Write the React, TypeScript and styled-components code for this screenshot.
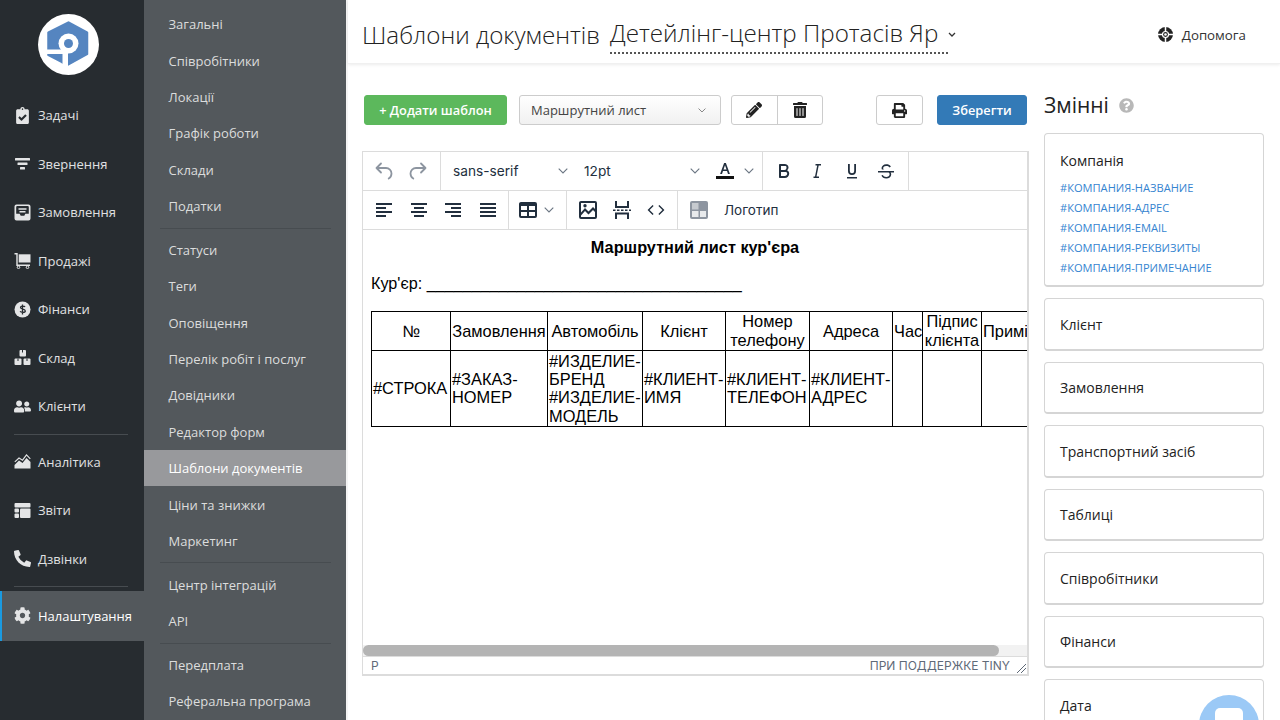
import React from "react";
import styled, { createGlobalStyle } from "styled-components";
import {
  FaClipboardCheck,
  FaUserFriends,
  FaPhoneAlt,
  FaCog,
  FaPencilAlt,
  FaTrashAlt,
  FaPrint,
  FaQuestionCircle,
} from "react-icons/fa";

const GlobalStyle = createGlobalStyle`
  html, body { margin: 0; padding: 0; height: 720px; overflow: hidden; background: #fff; }
  * { box-sizing: border-box; }
  body { font-family: "Open Sans", "Liberation Sans", sans-serif; color: #222; }
`;

const Page = styled.div`
  display: flex;
  width: 1280px;
  height: 720px;
  overflow: hidden;
  position: relative;
`;

const MainNav = styled.nav`
  width: 144px;
  flex: none;
  background: #272c30;
  display: flex;
  flex-direction: column;
`;

const LogoWrap = styled.div`
  height: 91px;
  flex: none;
  display: flex;
  justify-content: center;
  padding-top: 13.5px;
  padding-right: 7px;
`;

const NavItem = styled.a<{ $active?: boolean }>`
  height: ${(p) => (p.$active ? "49.5px" : "48.5px")};
  flex: none;
  display: flex;
  align-items: center;
  gap: 7px;
  padding-left: ${(p) => (p.$active ? "12px" : "14px")};
  margin-top: ${(p) => (p.$active ? "1px" : "0")};
  font-size: 13px;
  color: ${(p) => (p.$active ? "#fff" : "#e0e1e2")};
  font-weight: ${(p) => (p.$active ? 500 : 400)};
  background: ${(p) => (p.$active ? "#53585c" : "transparent")};
  border-left: ${(p) => (p.$active ? "2px solid #1a9ae0" : "0")};
`;

const NavIcon = styled.span`
  width: 17px;
  height: 17px;
  display: flex;
  align-items: center;
  justify-content: center;
  color: #e4e5e6;
  font-size: 17px;
  flex: none;
`;

const NavRule = styled.hr`
  margin: 3px 20px 3px 14px;
  border: 0;
  border-top: 1px solid #474c50;
  height: 1px;
  flex: none;
  width: 114px;
`;

const SubNav = styled.nav`
  width: 202px;
  flex: none;
  background: #53585c;
  padding-top: 6px;
  display: flex;
  flex-direction: column;
`;

const SubItem = styled.a<{ $active?: boolean }>`
  height: 36.4px;
  flex: none;
  display: flex;
  align-items: center;
  padding-left: 24.5px;
  font-size: 13px;
  color: ${(p) => (p.$active ? "#fff" : "#dcdddd")};
  font-weight: ${(p) => (p.$active ? 500 : 400)};
  background: ${(p) => (p.$active ? "#98999c" : "transparent")};
`;

const SubRule = styled.hr`
  margin: 3.2px 15px 3.2px 16px;
  border: 0;
  border-top: 1px solid #474c50;
  height: 1px;
  flex: none;
`;

const Main = styled.main`
  flex: 1;
  min-width: 0;
  display: flex;
  flex-direction: column;
  border-left: 2px solid #f4f4f4;
`;

const Header = styled.header`
  height: 64px;
  flex: none;
  display: flex;
  align-items: center;
  padding: 6px 34px 0 14px;
  border-bottom: 1px solid #f0f0f0;
  box-shadow: 0 1px 3px rgba(0, 0, 0, 0.08);
`;

const Title = styled.h1`
  margin: 0;
  font-size: 24.2px;
  line-height: 32px;
  font-weight: 300;
  color: #222;
`;

const Company = styled.div`
  margin-left: 10px;
  font-size: 24.2px;
  line-height: 32px;
  font-weight: 300;
  color: #222;
  border-bottom: 2px dotted #555;
  height: 37px;
  flex: none;
  width: 338px;
  margin-top: 1px;
  white-space: nowrap;
`;

const Caret = styled.svg`
  width: 8px;
  height: 5px;
  flex: none;
`;

const Help = styled.a`
  margin-left: auto;
  display: flex;
  align-items: center;
  gap: 9px;
  font-size: 13.3px;
  color: #333;
`;

const Body = styled.div`
  flex: 1;
  min-height: 0;
  display: flex;
`;

const Work = styled.section`
  width: 681px;
  flex: none;
  padding: 31px 0 0 14px;
`;

const Actions = styled.div`
  display: flex;
  align-items: center;
  height: 30px;
  margin-left: 2px;
`;

const Btn = styled.button<{ $w: number; $bg?: string; $ml?: number }>`
  width: ${(p) => p.$w}px;
  height: 30px;
  margin-left: ${(p) => p.$ml ?? 0}px;
  padding: 0;
  border-radius: 3px;
  border: 1px solid ${(p) => p.$bg ?? "#ccc"};
  background: ${(p) => p.$bg ?? "#fff"};
  color: ${(p) => (p.$bg ? "#fff" : "#222")};
  font: 600 12.8px "Open Sans", sans-serif;
  display: flex;
  align-items: center;
  justify-content: center;
  svg { font-size: 15px; }
`;

const SelectBox = styled.div`
  width: 202px;
  height: 30px;
  margin-left: 12px;
  border: 1px solid #ccc;
  border-radius: 3px;
  background: linear-gradient(#fff, #f1f1f1);
  display: flex;
  align-items: center;
  justify-content: space-between;
  padding: 0 14px 0 11px;
  font-size: 13px;
  color: #444;
`;

const BtnGroup = styled.div`
  display: flex;
  margin-left: 10px;
  border: 1px solid #ccc;
  border-radius: 3px;
  height: 30px;
  width: 92px;
`;

const GroupCell = styled.div`
  flex: 1;
  display: flex;
  align-items: center;
  justify-content: center;
  color: #222;
  font-size: 16px;
  & + & { border-left: 1px solid #ccc; }
`;

const Editor = styled.div`
  margin-top: 26px;
  width: 667px;
  height: 525px;
  border-style: solid;
  border-width: 1px 2px 2px 1px;
  border-color: #dcdcdc;
  display: flex;
  flex-direction: column;
  overflow: hidden;
`;

const ToolRow = styled.div`
  height: 39px;
  flex: none;
  display: flex;
  border-bottom: 1px solid #dcdcdc;
  color: #222f3e;
`;

const ToolGroup = styled.div<{ $w: number }>`
  width: ${(p) => p.$w}px;
  flex: none;
  display: flex;
  align-items: center;
  border-right: 1px solid #dcdcdc;
  padding: 0 4px;
  &:last-child { border-right: 0; }
`;

const ToolBtn = styled.span<{ $w?: number; $muted?: boolean }>`
  width: ${(p) => p.$w ?? 34}px;
  height: 24px;
  flex: none;
  display: flex;
  align-items: center;
  justify-content: center;
  color: ${(p) => (p.$muted ? "#8d95a0" : "#222f3e")};
`;

const ToolSelect = styled.span<{ $w: number; $pr: number }>`
  width: ${(p) => p.$w}px;
  flex: none;
  font: 13.7px Inter, "Open Sans", sans-serif;
  color: #222f3e;
  display: flex;
  align-items: center;
  justify-content: space-between;
  padding: 0 ${(p) => p.$pr}px 0 8px;
`;

const ToolLabel = styled.span`
  font: 13.5px Inter, "Open Sans", sans-serif;
  color: #222f3e;
  margin-left: 8px;
`;

const Doc = styled.div`
  flex: 1;
  min-height: 0;
  overflow: hidden;
  padding: 0 0 0 8px;
  font: 16.4px/18.4px "Liberation Sans", Arial, sans-serif;
  color: #000;
`;

const DocTitle = styled.p`
  margin: 7.5px 8px 0 0;
  text-align: center;
  font-weight: 700;
  font-size: 16.3px;
`;

const DocLine = styled.p`
  margin: 18px 0 0 0;
  white-space: nowrap;
  font-size: 16.2px;
`;

const DocTable = styled.table`
  margin-top: 18.5px;
  border-collapse: collapse;
  table-layout: fixed;
  width: 678px;
  & td {
    border: 1px solid #000;
    padding: 0 1px;
    line-height: 18.4px;
    vertical-align: middle;
  }
`;

const HeadCell = styled.td`
  text-align: center;
  height: 39px;
  white-space: normal;
`;

const Cell = styled.td`
  height: 76px;
`;

const HScroll = styled.div`
  height: 11px;
  flex: none;
  background: #f2f2f2;
`;

const HThumb = styled.div`
  width: 636px;
  height: 100%;
  background: #b4b4b4;
  border-radius: 6px;
`;

const StatusBar = styled.div`
  height: 18px;
  flex: none;
  border-top: 1px solid #dcdcdc;
  display: flex;
  align-items: center;
  justify-content: space-between;
  padding: 0 1px 0 8px;
  font: 12px Inter, "Open Sans", sans-serif;
  color: #5f6a78;
`;

const Resize = styled.svg`
  width: 9px;
  height: 9px;
  margin-left: 7px;
  margin-top: 6px;
`;

const Brand = styled.span`
  display: flex;
  align-items: center;
`;

const Side = styled.aside`
  width: 220px;
  flex: none;
  margin-left: 15px;
  padding-top: 26px;
  display: flex;
  flex-direction: column;
`;

const SideTitle = styled.h2`
  margin: 0 0 13px;
  height: 30px;
  font-size: 21px;
  line-height: 30px;
  font-weight: 400;
  color: #222;
  display: flex;
  align-items: center;
  svg { font-size: 15px; color: #b8b8b8; margin-left: 10px; }
`;

const Card = styled.div`
  width: 220px;
  height: 52.5px;
  flex: none;
  margin-bottom: 11px;
  border: 1px solid #d5d5d5;
  border-bottom-width: 2px;
  border-radius: 4px;
  padding: 1px 15px 0;
  font-size: 14px;
  color: #222;
  display: flex;
  align-items: center;
`;

const OpenCard = styled(Card)`
  height: 154px;
  display: block;
  padding-top: 16.5px;
`;

const VarLink = styled.a`
  display: block;
  font-size: 11.1px;
  line-height: 20.2px;
  color: #3584d0;
  white-space: nowrap;
`;

const CardName = styled.div`
  line-height: 20px;
  margin-bottom: 7px;
`;

const Chat = styled.div`
  position: absolute;
  left: 1199px;
  top: 695px;
  width: 60px;
  height: 60px;
  border-radius: 50%;
  background: #9bc9f6;
  display: flex;
  justify-content: center;
  padding-top: 13px;
`;

const ChatGlyph = styled.div`
  width: 28px;
  height: 22px;
  border-radius: 5px;
  background: #fff;
`;

const Ico = ({ children, w = 24 }: { children: React.ReactNode; w?: number }) => (
  <svg width={w} height={w} viewBox="0 0 24 24" fill="currentColor" stroke="none">
    {children}
  </svg>
);

const Chevron = ({ color = "#6b7683", w = 10 }: { color?: string; w?: number }) => (
  <svg width={w} height={w * 0.6} viewBox="0 0 10 6" fill="none" stroke={color} strokeWidth="1.1">
    <path d="M.7.7L5 5 9.300.7" />
  </svg>
);

const Logo = () => (
  <svg width="61" height="61" viewBox="0 0 61 61">
    <circle cx="30.5" cy="30.5" r="30.5" fill="#fff" />
    <path
      d="M30.500 8.500L49 18.500V40L30 50.500 24 48 10.500 41V18.500Z"
      fill="#5585c0"
      stroke="#5585c0"
      strokeWidth="2.500"
      strokeLinejoin="round"
    />
    <rect x="24.500" y="29" width="5.500" height="24" fill="#fff" />
    <rect x="8" y="35.500" width="20" height="4.500" fill="#fff" />
    <circle cx="30.500" cy="29.500" r="10" fill="#fff" />
    <circle cx="30.500" cy="29.500" r="4.500" fill="#5585c0" />
  </svg>
);

const LifeRing = () => (
  <svg width="15" height="15" viewBox="0 0 15 15">
    <circle cx="7.500" cy="7.500" r="7.500" fill="#222" />
    <path d="M7.500 0v15M0 7.500h15" stroke="#fff" strokeWidth="1.500" />
    <circle cx="7.500" cy="7.500" r="3.600" fill="#fff" />
    <circle cx="7.500" cy="7.500" r="2.400" fill="#222" />
    <circle cx="7.500" cy="7.500" r="1.300" fill="#fff" />
  </svg>
);

const glyph = { width: 17, height: 17, viewBox: "0 0 17 17", fill: "#e4e5e6" };

const mainNav = [
  ["Задачі", <FaClipboardCheck key="a" />],
  [
    "Звернення",
    <svg key="b" {...glyph}>
      <rect x="1" y="3" width="15" height="2.400" rx=".5" />
      <rect x="3.500" y="7.500" width="10" height="2.400" rx=".5" />
      <rect x="6" y="12" width="5" height="2.400" rx=".5" />
    </svg>,
  ],
  [
    "Замовлення",
    <svg key="c" {...glyph}>
      <path d="M2.500.5h12a2 2 0 0 1 2 2v12a2 2 0 0 1-2 2h-12a2 2 0 0 1-2-2v-12a2 2 0 0 1 2-2z" />
      <path d="M2.200 9.800V3a1 1 0 0 1 1-1h10.600a1 1 0 0 1 1 1v6.800h-3.500l-1 2H6.700l-1-2z" fill="#272c30" />
      <path d="M4.500 4.300h8v1.400h-8zM5.500 7h6v1.400h-6z" />
    </svg>,
  ],
  [
    "Продажі",
    <svg key="d" {...glyph}>
      <path d="M.5 1h3.200v11.500H16V14H2.300V2.400H.5z" />
      <path d="M4.700 2.300H16.500V10.500H4.700z" />
      <circle cx="4.500" cy="15.300" r="1.300" fill="none" stroke="#e4e5e6" />
      <circle cx="13.500" cy="15.300" r="1.300" fill="none" stroke="#e4e5e6" />
    </svg>,
  ],
  [
    "Фінанси",
    <svg key="e" {...glyph}>
      <circle cx="8.500" cy="8.500" r="8" />
      <path
        d="M11 6c-.5-1-4.500-1.400-4.500.6 0 2 4.800 1.200 4.800 3.300 0 2-4.500 1.700-5.200.4M8.500 3.500v10"
        stroke="#272c30"
        strokeWidth="1.300"
        fill="none"
      />
    </svg>,
  ],
  [
    "Склад",
    <svg key="f" {...glyph}>
      <rect x="5.500" y="1" width="6.500" height="6.500" rx="1" />
      <rect x=".5" y="9.500" width="7" height="6.500" rx="1" />
      <rect x="9.500" y="9.500" width="7" height="6.500" rx="1" />
      <path d="M8 1v2.500h1V1zM3.500 9.500V12h1V9.500zM12.500 9.500V12h1V9.500z" fill="#272c30" />
    </svg>,
  ],
  ["Клієнти", <FaUserFriends key="g" />],
] as const;

const mainNav2 = [
  [
    "Аналітика",
    <svg key="h" {...glyph}>
      <path d="M.8 8.800L5 5l3.500 2.200L12.500 1.800l3.800 4" fill="none" stroke="#e4e5e6" strokeWidth="1.100" />
      <path d="M.5 15.500V12L5 7.500 8.500 10l4-5 4 4v6.500z" />
    </svg>,
  ],
  [
    "Звіти",
    <svg key="i" {...glyph}>
      <rect x=".5" y="1" width="16" height="4.500" rx="1" />
      <rect x=".5" y="6.500" width="4.500" height="4" rx="1" />
      <rect x=".5" y="11.500" width="4.500" height="4.500" rx="1" />
      <rect x="6" y="6.500" width="10.500" height="9.500" rx="1" />
    </svg>,
  ],
  ["Дзвінки", <FaPhoneAlt key="j" />],
] as const;

const subGroups = [
  ["Загальні", "Співробітники", "Локації", "Графік роботи", "Склади", "Податки"],
  ["Статуси", "Теги", "Оповіщення", "Перелік робіт і послуг", "Довідники", "Редактор форм", "Шаблони документів", "Ціни та знижки", "Маркетинг"],
  ["Центр інтеграцій", "API"],
  ["Передплата", "Реферальна програма"],
];

const colWidths = [79, 97, 95, 83, 84, 83, 30, 59, 68];
const headCells = ["№", "Замовлення", "Автомобіль", "Клієнт", "Номер телефону", "Адреса", "Час", "Підпис клієнта", "Примітка"];
const closedCards = ["Клієнт", "Замовлення", "Транспортний засіб", "Таблиці", "Співробітники", "Фінанси", "Дата"];
const companyVars = ["#КОМПАНИЯ-НАЗВАНИЕ", "#КОМПАНИЯ-АДРЕС", "#КОМПАНИЯ-EMAIL", "#КОМПАНИЯ-РЕКВИЗИТЫ", "#КОМПАНИЯ-ПРИМЕЧАНИЕ"];

const alignPaths = {
  left: "M4 5h16v2H4zM4 9h10v2H4zM4 13h16v2H4zM4 17h10v2H4z",
  center: "M4 5h16v2H4zM7 9h10v2H7zM4 13h16v2H4zM7 17h10v2H7z",
  right: "M4 5h16v2H4zM10 9h10v2H10zM4 13h16v2H4zM10 17h10v2H10z",
  justify: "M4 5h16v2H4zM4 9h16v2H4zM4 13h16v2H4zM4 17h16v2H4z",
};

export default function App() {
  return (
    <Page>
      <GlobalStyle />
      <MainNav>
        <LogoWrap>
          <Logo />
        </LogoWrap>
        {mainNav.map(([label, icon]) => (
          <NavItem key={label}>
            <NavIcon>{icon}</NavIcon>
            {label}
          </NavItem>
        ))}
        <NavRule />
        {mainNav2.map(([label, icon]) => (
          <NavItem key={label}>
            <NavIcon>{icon}</NavIcon>
            {label}
          </NavItem>
        ))}
        <NavRule />
        <NavItem $active>
          <NavIcon>
            <FaCog />
          </NavIcon>
          Налаштування
        </NavItem>
      </MainNav>

      <SubNav>
        {subGroups.map((group, i) => (
          <React.Fragment key={i}>
            {i > 0 && <SubRule />}
            {group.map((label) => (
              <SubItem key={label} $active={label === "Шаблони документів"}>
                {label}
              </SubItem>
            ))}
          </React.Fragment>
        ))}
      </SubNav>

      <Main>
        <Header>
          <Title>Шаблони документів</Title>
          <Company>Детейлінг-центр Протасів Яр</Company>
          <Caret viewBox="0 0 8 5" fill="none" stroke="#333" strokeWidth="1.300">
            <path d="M1 1l3 3 3-3" />
          </Caret>
          <Help>
            <LifeRing />
            Допомога
          </Help>
        </Header>

        <Body>
          <Work>
            <Actions>
              <Btn $w={143} $bg="#5cb85c">+ Додати шаблон</Btn>
              <SelectBox>
                Маршрутний лист
                <Chevron w={8} color="#777" />
              </SelectBox>
              <BtnGroup>
                <GroupCell>
                  <FaPencilAlt />
                </GroupCell>
                <GroupCell>
                  <FaTrashAlt />
                </GroupCell>
              </BtnGroup>
              <Btn $w={47} $ml={53}>
                <FaPrint />
              </Btn>
              <Btn $w={90} $ml={14} $bg="#337ab7">Зберегти</Btn>
            </Actions>

            <Editor>
              <ToolRow>
                <ToolGroup $w={78}>
                  <ToolBtn $muted>
                    <Ico>
                      <path d="M9 4.500L4.500 9 9 13.500M4.500 9H14a5.500 5.500 0 0 1 5.500 5.500c0 2.200-1 4-2.800 5" fill="none" stroke="currentColor" strokeWidth="1.800" strokeLinecap="round" strokeLinejoin="round" />
                    </Ico>
                  </ToolBtn>
                  <ToolBtn $muted>
                    <Ico>
                      <path d="M15 4.500L19.500 9 15 13.500M19.500 9H10a5.500 5.500 0 0 0-5.500 5.500c0 2.200 1 4 2.800 5" fill="none" stroke="currentColor" strokeWidth="1.800" strokeLinecap="round" strokeLinejoin="round" />
                    </Ico>
                  </ToolBtn>
                </ToolGroup>
                <ToolGroup $w={322}>
                  <ToolSelect $w={131} $pr={8}>sans-serif<Chevron /></ToolSelect>
                  <ToolSelect $w={136} $pr={12}>12pt<Chevron /></ToolSelect>
                  <ToolBtn $w={26}>
                    <Ico>
                      <path d="M11.100 4h1.800l4 11h-1.900l-1-3H10l-1 3H7.100l4-11zm-.6 6.500h3L12 6.200l-1.500 4.300z" />
                      <rect x="3" y="17" width="18" height="3" fill="#111" />
                    </Ico>
                  </ToolBtn>
                  <ToolBtn $w={22}><Chevron /></ToolBtn>
                </ToolGroup>
                <ToolGroup $w={146}>
                  <ToolBtn>
                    <Ico><path d="M7.800 19c-.3 0-.8-.4-.8-.8V5.700c0-.4.400-.7.800-.7h4.700c2.300 0 4 1.500 4 3.500 0 1.200-.6 2.200-1.500 2.800 1.300.6 2.200 1.800 2.200 3.200 0 2.500-1.900 4.500-4.400 4.500h-5zm1.200-8h3.500c1.200 0 2-.8 2-2.500S13.700 7 12.500 7H9v4zm0 6h3.800c1.400 0 2.400-1 2.400-2.500S14.200 13 12.800 13H9v4z" /></Ico>
                  </ToolBtn>
                  <ToolBtn>
                    <Ico><path d="M12.700 6.500l-2.200 11H13V19H7.500v-1.500H9l2.200-11H9.500V5H15v1.500z" /></Ico>
                  </ToolBtn>
                  <ToolBtn>
                    <Ico><path d="M7 18h10v1.500H7zM8 5h1.800v7a2.200 2.200 0 0 0 4.400 0V5H16v7a4 4 0 0 1-8 0z" /></Ico>
                  </ToolBtn>
                  <ToolBtn>
                    <Ico><path d="M15.600 8.500c-.5-.7-1-1.100-1.500-1.300-.6-.2-1.200-.3-2-.2-1 0-1.800.3-2.300.8-.5.500-.7 1-.6 1.600.1.500.4 1 1 1.200H7.900a4 4 0 0 1-.3-1.200c0-1.100.4-2.100 1.300-2.900C9.800 5.700 10.800 5.300 12.100 5.300c1.100 0 2 .1 2.800.5.800.3 1.500.9 2 1.700l-1.300 1zM4 12h16v1.500h-3.400c.5.700.7 1.500.6 2.300-.1 1.100-.6 2-1.500 2.700-.9.700-2.100 1-3.500 1-1.200-.1-2.200-.3-3-.8-.8-.5-1.400-1.200-1.800-2.100l1.500-.7c.4.700.8 1.200 1.300 1.500.5.300 1.200.5 2 .5 1 0 1.800-.2 2.400-.6.600-.4.900-1 1-1.700.1-.5-.1-1-.4-1.500-.2-.2-.4-.4-.6-.6H4V12z" /></Ico>
                  </ToolBtn>
                </ToolGroup>
                <ToolGroup $w={120} />
              </ToolRow>
              <ToolRow>
                <ToolGroup $w={146}>
                  {(Object.keys(alignPaths) as (keyof typeof alignPaths)[]).map((k) => (
                    <ToolBtn key={k} $w={34.5}>
                      <Ico><path d={alignPaths[k]} /></Ico>
                    </ToolBtn>
                  ))}
                </ToolGroup>
                <ToolGroup $w={58}>
                  <ToolBtn $w={30}>
                    <Ico><path d="M19 4a2 2 0 0 1 2 2v12a2 2 0 0 1-2 2H5a2 2 0 0 1-2-2V6c0-1.100.9-2 2-2h14zM5 14v4h6v-4H5zm14 0h-6v4h6v-4zm0-6h-6v4h6V8zM5 12h6V8H5v4z" /></Ico>
                  </ToolBtn>
                  <ToolBtn $w={12}><Chevron /></ToolBtn>
                </ToolGroup>
                <ToolGroup $w={111}>
                  <ToolBtn>
                    <Ico><path d="M5 3h14a2 2 0 0 1 2 2v14a2 2 0 0 1-2 2H5a2 2 0 0 1-2-2V5c0-1.100.9-2 2-2zm0 2v9.500L9 10l3.500 3.500L17 9l2 2V5H5zm0 14h14v-5l-2-2-4.500 4.500L9 13l-4 4.500V19zM9 9.500a1.700 1.700 0 1 1 0-3.400 1.700 1.700 0 0 1 0 3.400z" fillRule="evenodd" /></Ico>
                  </ToolBtn>
                  <ToolBtn>
                    <Ico><path d="M5 3h2v5h10V3h2v7H5zM3 11.500h2.500V13H3zM7 11.500h2.500V13H7zM11 11.500h2.500V13H11zM15 11.500h2.500V13H15zM19 11.500h2V13h-2zM5 14.500h14V21h-2v-4.500H7V21H5z" /></Ico>
                  </ToolBtn>
                  <ToolBtn>
                    <Ico w={22}><path d="M9.400 7.600L5 12l4.400 4.400-1.100 1.100L2.800 12l5.500-5.500zM14.600 7.600L19 12l-4.400 4.400 1.100 1.100 5.500-5.500-5.500-5.500z" /></Ico>
                  </ToolBtn>
                </ToolGroup>
                <ToolGroup $w={340}>
                  <ToolBtn>
                    <Ico>
                      <rect x="3" y="3" width="18" height="18" rx="2" fill="#8d95a0" />
                      <rect x="5" y="5" width="6.500" height="6.500" fill="#c6cacf" />
                      <rect x="5" y="13" width="6.500" height="6" fill="#e8eaec" />
                      <rect x="13" y="13" width="6" height="6" fill="#e8eaec" />
                    </Ico>
                  </ToolBtn>
                  <ToolLabel>Логотип</ToolLabel>
                </ToolGroup>
              </ToolRow>
              <Doc>
                <DocTitle>Маршрутний лист кур'єра</DocTitle>
                <DocLine>Кур'єр: ___________________________________</DocLine>
                <DocTable>
                  <colgroup>
                    {colWidths.map((w, i) => (
                      <col key={i} width={w} />
                    ))}
                  </colgroup>
                  <tbody>
                    <tr>
                      {headCells.map((c) => (
                        <HeadCell key={c}>{c}</HeadCell>
                      ))}
                    </tr>
                    <tr>
                      <Cell>#СТРОКА</Cell>
                      <Cell>#ЗАКАЗ-НОМЕР</Cell>
                      <Cell>#ИЗДЕЛИЕ-БРЕНД #ИЗДЕЛИЕ-МОДЕЛЬ</Cell>
                      <Cell>#КЛИЕНТ-ИМЯ</Cell>
                      <Cell>#КЛИЕНТ-ТЕЛЕФОН</Cell>
                      <Cell>#КЛИЕНТ-АДРЕС</Cell>
                      <Cell />
                      <Cell />
                      <Cell />
                    </tr>
                  </tbody>
                </DocTable>
              </Doc>
              <HScroll>
                <HThumb />
              </HScroll>
              <StatusBar>
                <span>P</span>
                <Brand>
                  ПРИ ПОДДЕРЖКЕ TINY
                  <Resize viewBox="0 0 9 9" stroke="#5f6a78" strokeWidth="1">
                    <path d="M0 9L9 0M4 9l5-5" />
                  </Resize>
                </Brand>
              </StatusBar>
            </Editor>
          </Work>

          <Side>
            <SideTitle>
              Змінні
              <FaQuestionCircle />
            </SideTitle>
            <OpenCard>
              <CardName>Компанія</CardName>
              {companyVars.map((v) => (
                <VarLink key={v}>{v}</VarLink>
              ))}
            </OpenCard>
            {closedCards.map((c) => (
              <Card key={c}>{c}</Card>
            ))}
          </Side>
        </Body>
      </Main>

      <Chat>
        <ChatGlyph />
      </Chat>
    </Page>
  );
}
